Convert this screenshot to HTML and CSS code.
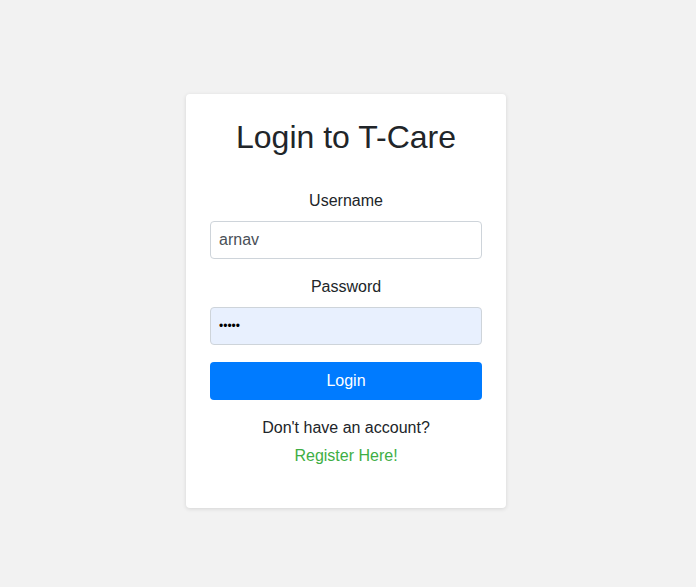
FILE: index.html
```html
<!DOCTYPE html>
<html>
<head>
<meta charset="utf-8">
<link rel="stylesheet" href="styles.css">
</head>
<body>
<div class="card">
  <h1 class="title">Login to T-Care</h1>
  <form class="form">
    <label class="label" for="u">Username</label>
    <input class="input" id="u" type="text" value="arnav">
    <label class="label label-pw" for="p">Password</label>
    <input class="input input-filled" id="p" type="password" value="arnav">
    <button class="btn" type="button">Login</button>
  </form>
  <p class="note">Don't have an account?</p>
  <a class="link" href="#">Register Here!</a>
</div>
</body>
</html>
```
FILE: styles.css
```css
html, body {
  margin: 0;
  padding: 0;
}
body {
  background: #f2f2f2;
  font-family: "Liberation Sans", Arial, sans-serif;
  color: #212529;
  display: flex;
  justify-content: center;
  align-items: flex-start;
  padding: 94px 4px 0 0;
  min-height: 587px;
  box-sizing: border-box;
}
.card {
  width: 320px;
  box-sizing: border-box;
  background: #fff;
  border-radius: 4px;
  box-shadow: 0 1px 4px rgba(0,0,0,0.12);
  padding: 24px 24px 40px;
  display: flex;
  flex-direction: column;
  align-items: stretch;
  text-align: center;
}
.title {
  margin: 0 0 33px;
  font-size: 32px;
  font-weight: 400;
  line-height: 1.2;
}
.form {
  display: flex;
  flex-direction: column;
}
.label {
  font-size: 16px;
  line-height: 24px;
  margin-bottom: 8px;
}
.label-pw {
  margin-top: 16px;
}
.input {
  height: 38px;
  box-sizing: border-box;
  border: 1px solid #ced4da;
  border-radius: 4px;
  padding: 6px 8px;
  font-family: inherit;
  font-size: 16px;
  color: #495057;
  background: #fff;
  outline: none;
}
.input-filled {
  background: #e8f0fe;
  color: #000;
  font-size: 12px;
}
.btn {
  margin-top: 17px;
  height: 38px;
  border: none;
  border-radius: 4px;
  background: #007bff;
  color: #fff;
  font-family: inherit;
  font-size: 16px;
}
.note {
  margin: 16px 0 0;
  font-size: 16px;
  line-height: 24px;
}
.link {
  margin-top: 4px;
  font-size: 16px;
  line-height: 24px;
  color: #3eae45;
  text-decoration: none;
  align-self: center;
}
```
